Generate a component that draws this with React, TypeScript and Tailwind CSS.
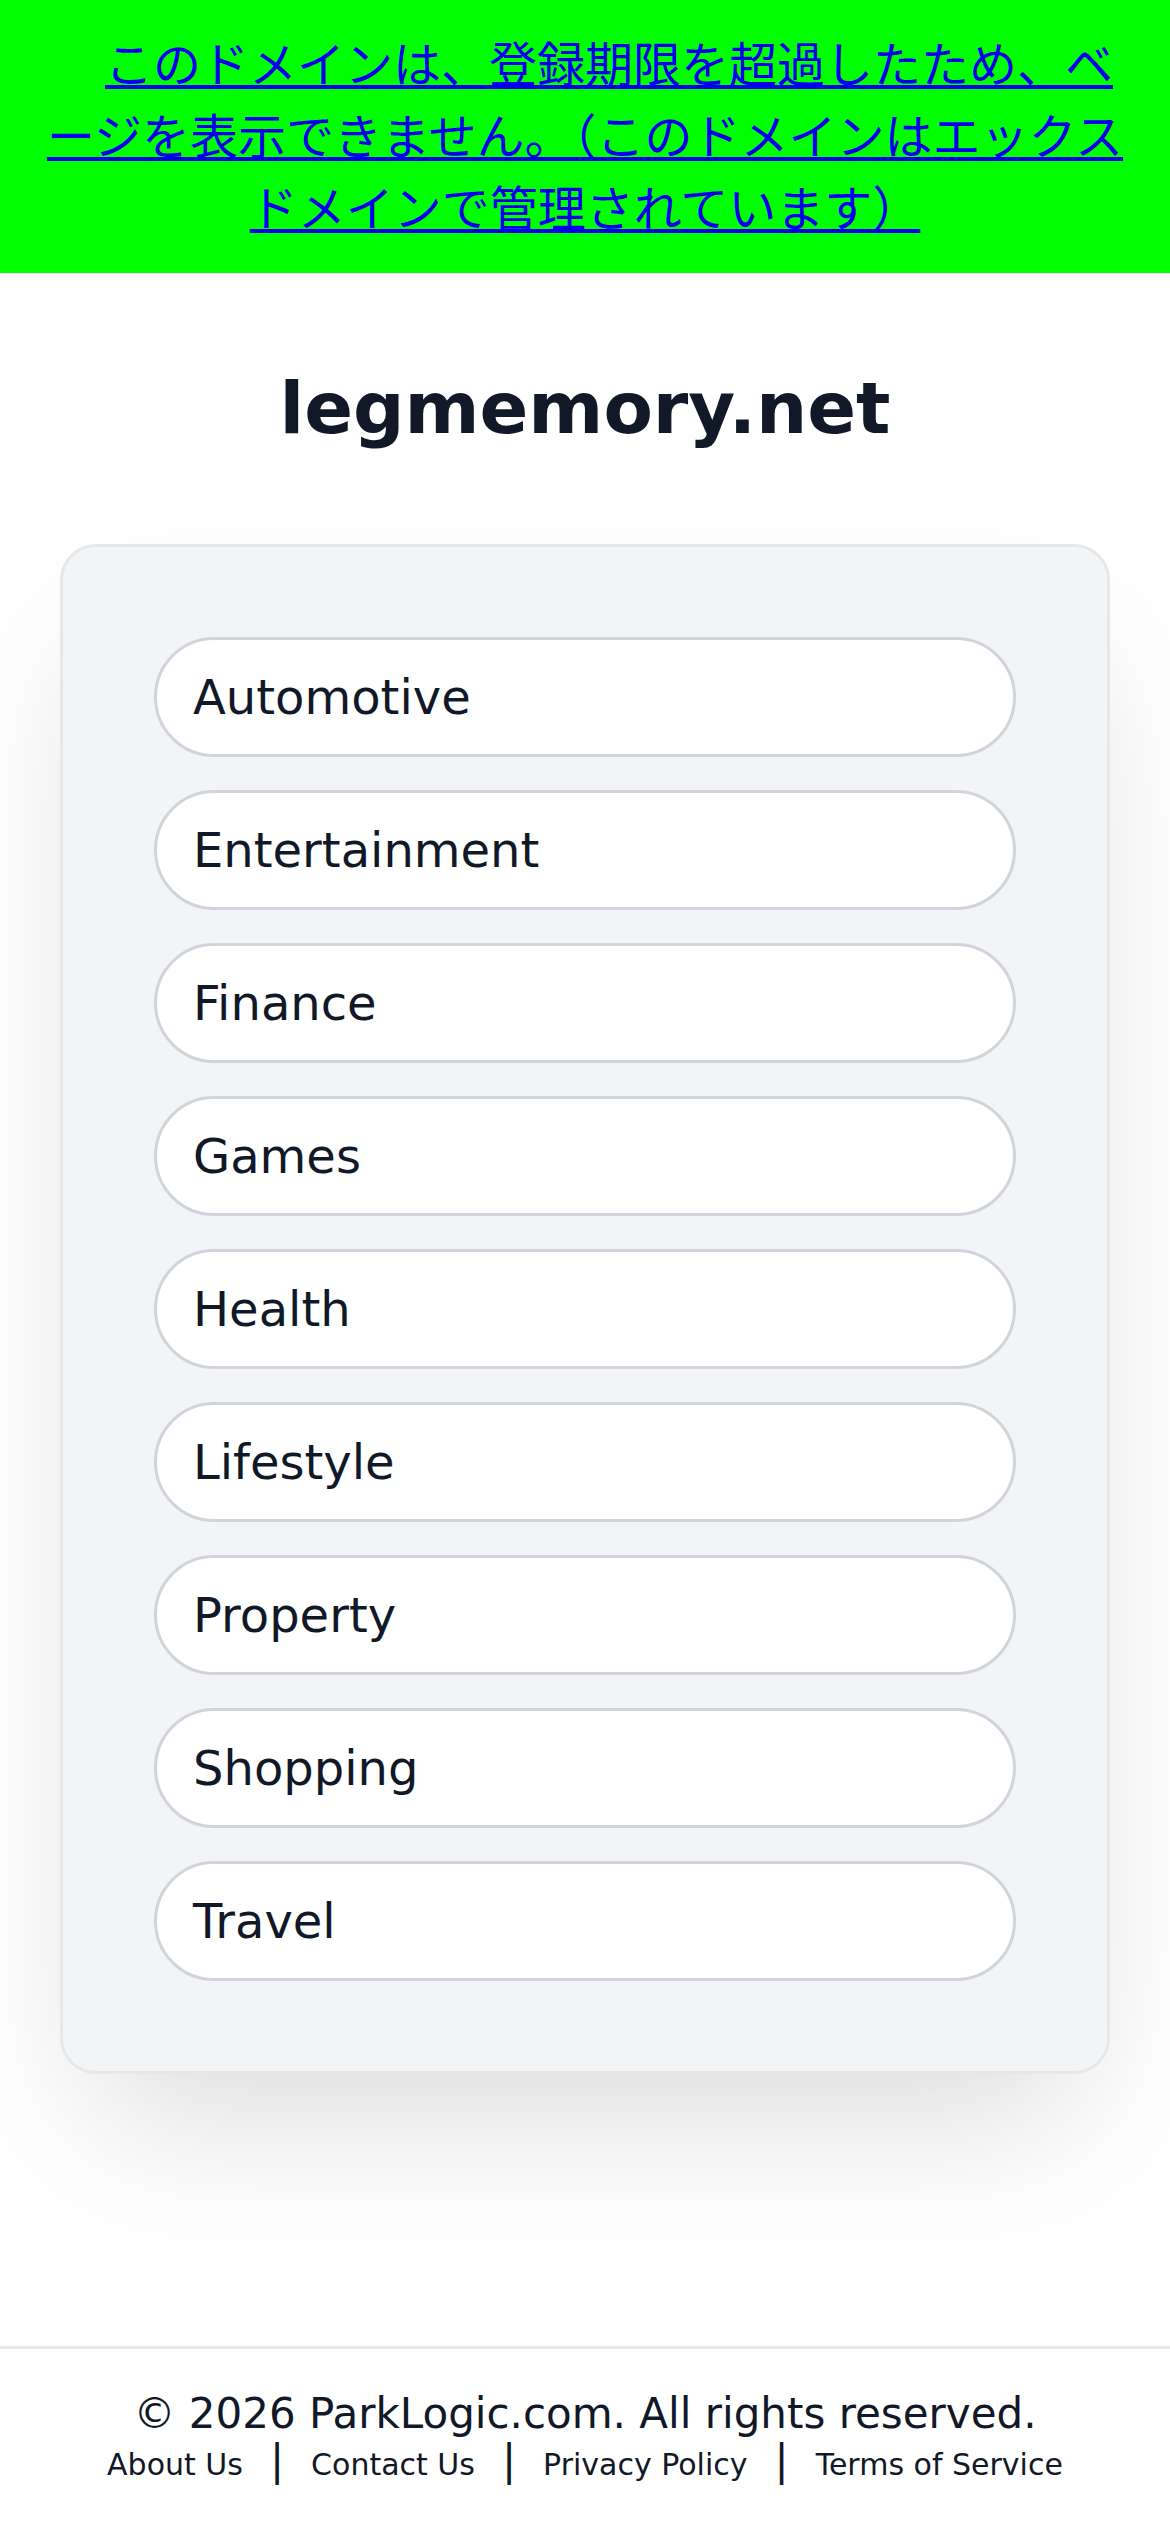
import React from "react";

const categories = [
  "Automotive",
  "Entertainment",
  "Finance",
  "Games",
  "Health",
  "Lifestyle",
  "Property",
  "Shopping",
  "Travel",
];

export default function App() {
  return (
    <div className="min-h-[2532px] flex flex-col bg-white font-['DejaVu_Sans',sans-serif]">
      <div className="bg-[#00ff00] px-[40px] pt-[29px] pb-[28px] text-center text-[48px] leading-[72px] indent-[48px] font-['DejaVu_Sans','Noto_Sans_CJK_JP',sans-serif]">
        <a href="#" className="text-[#0000ee] underline">
          このドメインは、登録期限を超過したため、ベージを表示できません。（このドメインはエックスドメインで管理されています）
        </a>
      </div>

      <h1 className="pt-[87px] pb-[88px] text-center text-[72px] leading-[96px] font-bold text-[#111827]">
        legmemory.net
      </h1>

      <div className="mx-[60px] flex flex-col gap-[33px] rounded-[36px] border-[3px] border-[#e5e7eb] bg-[#f3f4f6] px-[91px] py-[90px] shadow-[0_75px_150px_-36px_rgba(0,0,0,0.15)]">
        {categories.map((c) => (
          <a
            key={c}
            href="#"
            className="block rounded-full border-[3px] border-[#d1d5db] bg-white py-[21px] pl-[36px] text-[48px] leading-[72px] text-[#111827]"
          >
            {c}
          </a>
        ))}
      </div>

      <footer className="mt-auto border-t-[3px] border-[#e5e7eb] pt-[35px] pb-[49px] text-center text-[#111827]">
        <p className="text-[42px] leading-[60px]">© 2026 ParkLogic.com. All rights reserved.</p>
        <div className="-mt-[4px] flex items-baseline justify-center gap-[27px]">
          <a href="#" className="text-[30px] leading-[36px]">About Us</a>
          <span className="text-[42px] leading-[42px]">|</span>
          <a href="#" className="text-[30px] leading-[36px]">Contact Us</a>
          <span className="text-[42px] leading-[42px]">|</span>
          <a href="#" className="text-[30px] leading-[36px]">Privacy Policy</a>
          <span className="text-[42px] leading-[42px]">|</span>
          <a href="#" className="text-[30px] leading-[36px]">Terms of Service</a>
        </div>
      </footer>
    </div>
  );
}
